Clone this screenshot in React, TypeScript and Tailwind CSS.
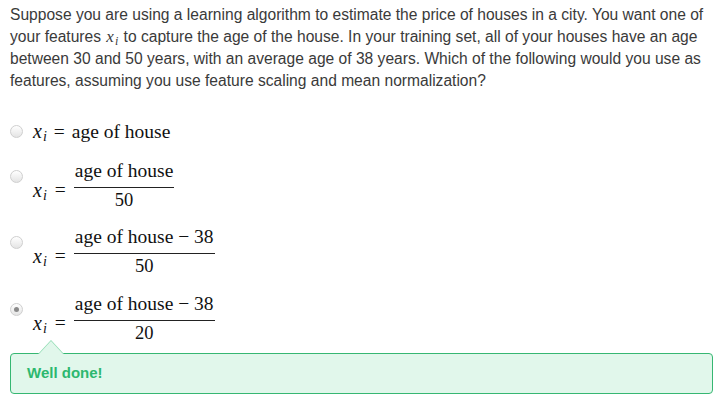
import React from "react";

const serif = { fontFamily: '"Liberation Serif", "Times New Roman", serif' };

function Xi({ small }: { small?: boolean }) {
  return (
    <span className="inline-flex items-baseline italic" style={serif}>
      <span className={small ? "text-[17px] leading-[20px]" : "text-[20px]"}>x</span>
      <span className={small ? "text-[12px] leading-[14px] relative top-[3px] ml-[1px]" : "text-[14px] relative top-[3px] ml-[1px]"}>i</span>
    </span>
  );
}

function Radio({ checked }: { checked?: boolean }) {
  return (
    <span className="flex items-center justify-center w-[13px] h-[13px] rounded-full border border-[#cfcfcf] bg-gradient-to-b from-[#ffffff] to-[#e4e4e4] shrink-0">
      {checked && <span className="w-[5px] h-[5px] rounded-full bg-[#8a8a8a]" />}
    </span>
  );
}

function Frac({ num, den }: { num: string; den: string }) {
  return (
    <span className="inline-flex flex-col items-center text-[#111]" style={serif}>
      <span className="text-[19.5px] leading-[22px] px-[1px]">{num}</span>
      <span className="self-stretch h-px bg-[#222] mt-[5px]" />
      <span className="text-[18.5px] leading-[22px] mt-[1px]">{den}</span>
    </span>
  );
}

function FracOption({ num, den, checked }: { num: string; den: string; checked?: boolean }) {
  return (
    <div className="flex items-start">
      <div className="pt-[10px]">
        <Radio checked={checked} />
      </div>
      <div className="flex items-center ml-[10px] text-[#111]">
        <span className="mt-[9px] flex items-center">
          <Xi />
          <span className="text-[19.5px] mx-[8px]" style={serif}>=</span>
        </span>
        <Frac num={num} den={den} />
      </div>
    </div>
  );
}

export default function App() {
  return (
    <div
      className="w-[723px] h-[401px] bg-white px-[10px] pt-[4px] overflow-hidden"
      style={{ fontFamily: '"Liberation Sans", Arial, sans-serif' }}
    >
      <p className="text-[15.6px] leading-[22px] text-[#3a3a3a]">
        Suppose you are using a learning algorithm to estimate the price of houses in a city. You want one of
        your features <span className="mx-[1px]"><Xi small /></span> to capture the age of the house. In your training set, all of your houses have an age
        between 30 and 50 years, with an average age of 38 years. Which of the following would you use as
        features, assuming you use feature scaling and mean normalization?
      </p>

      <div className="mt-[28px] flex flex-col">
        <div className="flex items-center h-[22px]">
          <Radio />
          <span className="ml-[10px] flex items-baseline text-[#111]">
            <Xi />
            <span className="text-[19.5px] mx-[7px]" style={serif}>=</span>
            <span className="text-[19.5px]" style={serif}>age of house</span>
          </span>
        </div>
        <div className="mt-[18px]">
          <FracOption num="age of house" den="50" />
        </div>
        <div className="mt-[15px]">
          <FracOption num="age of house − 38" den="50" />
        </div>
        <div className="mt-[16px]">
          <FracOption num="age of house − 38" den="20" checked />
        </div>
      </div>

      <div className="relative mt-[9px]">
        <div className="absolute left-[28px] top-[-13px] w-0 h-0 border-l-[13px] border-r-[13px] border-b-[14px] border-l-transparent border-r-transparent border-b-[#8fdcb2]" />
        <div className="absolute left-[29px] top-[-12px] w-0 h-0 border-l-[12px] border-r-[12px] border-b-[13px] border-l-transparent border-r-transparent border-b-[#e1f7eb]" />
        <div className="w-[703px] h-[41px] rounded-[4px] border border-[#36b772] bg-[#e1f7eb] flex items-center px-[16px]">
          <span className="text-[15px] font-bold text-[#2db86f]">Well done!</span>
        </div>
      </div>
    </div>
  );
}
